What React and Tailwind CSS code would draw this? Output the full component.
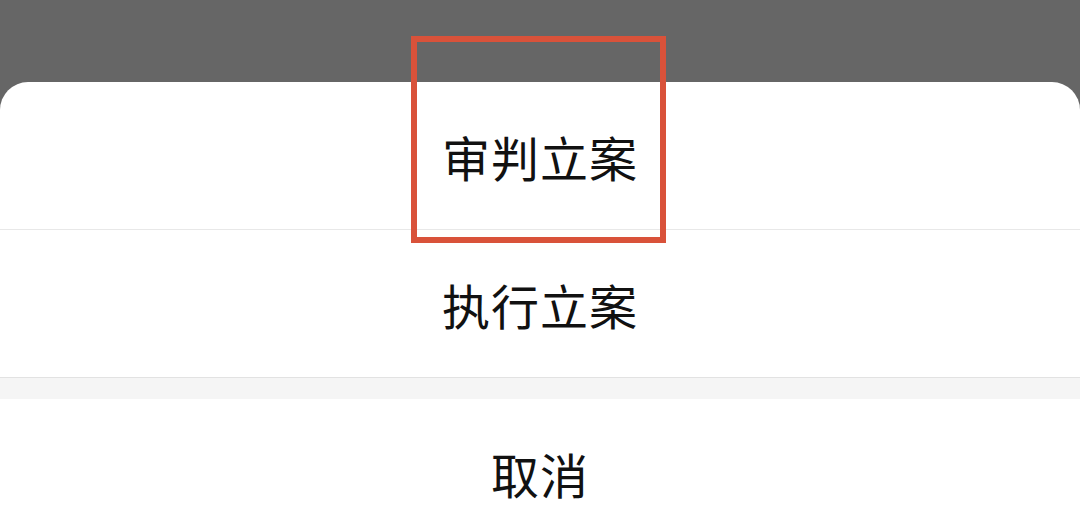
export default function App() {
  const font = { fontFamily: '"Noto Sans CJK SC", "Noto Sans", sans-serif' };

  return (
    <div className="relative w-[1080px] h-[520px] overflow-hidden bg-[#666666]" style={font}>
      <div className="mt-[82px] bg-white rounded-t-[28px]">
        <div className="h-[148px] flex items-center justify-center border-b border-[#e8e8e8]">
          <span className="text-[48px] leading-none text-[#111111] tracking-[1px]">审判立案</span>
        </div>
        <div className="h-[147px] flex items-center justify-center">
          <span className="text-[48px] leading-none text-[#111111] tracking-[1px]">执行立案</span>
        </div>
        <div className="h-[22px] bg-[#f5f5f5] border-t border-[#e2e2e2]" />
        <div className="h-[148px] flex items-center justify-center">
          <span className="text-[48px] leading-none text-[#111111] tracking-[1px]">取消</span>
        </div>
      </div>

      {/* highlight box drawn over the first option */}
      <div className="absolute left-[411px] top-[36px] w-[255px] h-[207px] border-[6px] border-[#d9523a]" />
    </div>
  );
}
